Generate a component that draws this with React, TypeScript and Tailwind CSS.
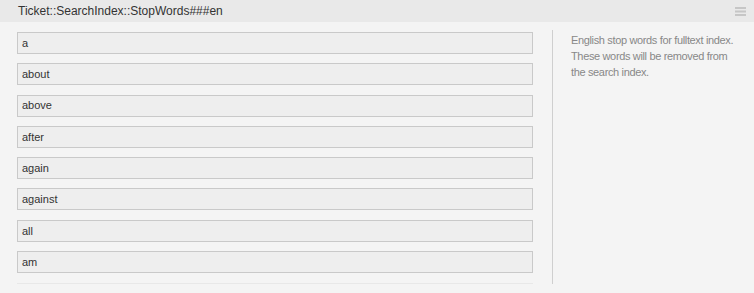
const words = ['a', 'about', 'above', 'after', 'again', 'against', 'all', 'am'];

export default function App() {
  return (
    <div className="w-[754px] h-[293px] bg-[#f4f4f4] font-['Liberation_Sans',Arial,sans-serif] overflow-hidden">
      {/* Header */}
      <div className="h-[22px] bg-[#e9e9e9] flex items-center justify-between pl-[18px] pr-[8px]">
        <span className="text-[12px] text-[#333]">Ticket::SearchIndex::StopWords###en</span>
        <svg width="11" height="9" viewBox="0 0 11 9" aria-hidden="true">
          <rect x="0" y="0" width="11" height="2" fill="#c6c6c6" />
          <rect x="0" y="3.5" width="11" height="2" fill="#c6c6c6" />
          <rect x="0" y="7" width="11" height="2" fill="#c6c6c6" />
        </svg>
      </div>

      {/* Body */}
      <div className="flex pt-[8px]">
        <div className="w-[516px] ml-[17px] pt-[2px] border-b border-[#e8e8e8] pb-[9px] flex flex-col gap-[9.3px]">
          {words.map((w) => (
            <div
              key={w}
              className="h-[22px] bg-[#eeeeee] border border-[#c9c9c9] flex items-center pl-[4px] text-[11px] text-[#333]"
            >
              {w}
            </div>
          ))}
        </div>
        <div className="ml-[19px] w-px h-[254px] bg-[#cfcfcf]" />
        <p className="ml-[18px] mt-[2px] w-[170px] text-[11px] tracking-[-0.35px] leading-[16px] text-[#888]">
          English stop words for fulltext index. These words will be removed from the search index.
        </p>
      </div>
    </div>
  );
}
